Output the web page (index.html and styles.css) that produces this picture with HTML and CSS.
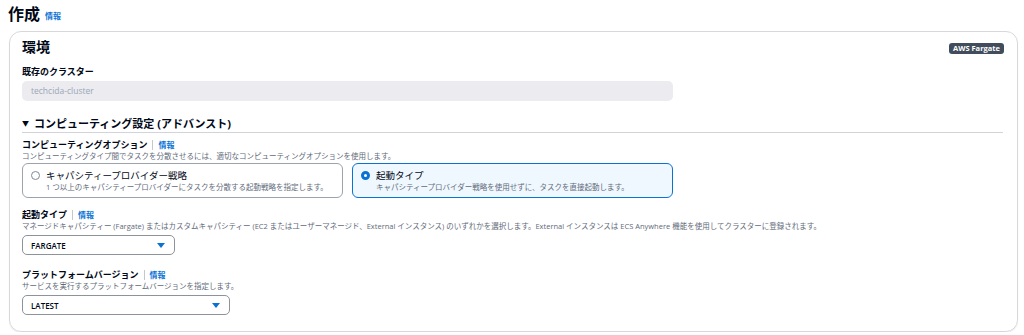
FILE: index.html
```html
<!DOCTYPE html>
<html lang="ja">
<head>
    <meta charset="UTF-8">
    <title>作成</title>
    <link rel="stylesheet" href="styles.css">
</head>
<body>
    <div class="page">
        <div class="page-title">
            <h1>作成</h1>
            <a class="info-link" href="#">情報</a>
        </div>

        <div class="card">
            <div class="card-header">
                <h2>環境</h2>
                <span class="badge">AWS Fargate</span>
            </div>

            <div class="field">
                <div class="label">既存のクラスター</div>
                <div class="input-disabled">techcida-cluster</div>
            </div>

            <div class="expand-header">
                <span class="caret-down">&#9660;</span>
                <span>コンピューティング設定 (アドバンスト)</span>
            </div>

            <div class="field field-first">
                <div class="label">コンピューティングオプション<span class="sep"></span><a class="info-link" href="#">情報</a></div>
                <div class="desc">コンピューティングタイプ間でタスクを分散させるには、適切なコンピューティングオプションを使用します。</div>
                <div class="tiles">
                    <div class="tile">
                        <span class="radio"></span>
                        <div>
                            <div class="tile-title">キャパシティープロバイダー戦略</div>
                            <div class="tile-desc">1 つ以上のキャパシティープロバイダーにタスクを分散する起動戦略を指定します。</div>
                        </div>
                    </div>
                    <div class="tile selected">
                        <span class="radio checked"></span>
                        <div>
                            <div class="tile-title">起動タイプ</div>
                            <div class="tile-desc">キャパシティープロバイダー戦略を使用せずに、タスクを直接起動します。</div>
                        </div>
                    </div>
                </div>
            </div>

            <div class="field">
                <div class="label">起動タイプ<span class="sep"></span><a class="info-link" href="#">情報</a></div>
                <div class="desc">マネージドキャパシティー (Fargate) またはカスタムキャパシティー (EC2 またはユーザーマネージド、External インスタンス) のいずれかを選択します。External インスタンスは ECS Anywhere 機能を使用してクラスターに登録されます。</div>
                <div class="select select-short">
                    <span>FARGATE</span>
                    <svg width="8" height="5" viewBox="0 0 8 5"><path d="M0 0 H8 L4 5 Z" fill="#0972d3"/></svg>
                </div>
            </div>

            <div class="field field-last">
                <div class="label">プラットフォームバージョン<span class="sep"></span><a class="info-link" href="#">情報</a></div>
                <div class="desc">サービスを実行するプラットフォームバージョンを指定します。</div>
                <div class="select select-mid">
                    <span>LATEST</span>
                    <svg width="8" height="5" viewBox="0 0 8 5"><path d="M0 0 H8 L4 5 Z" fill="#0972d3"/></svg>
                </div>
            </div>
        </div>
    </div>
</body>
</html>
```

FILE: styles.css
```css
body {
    margin: 0;
    font-family: "Open Sans", "Noto Sans CJK JP", sans-serif;
    color: #000716;
    background-color: #ffffff;
}
.page {
    padding: 2px 6px 0 9px;
}
.page-title {
    display: flex;
    align-items: center;
    gap: 5px;
    height: 24px;
    margin-left: -1px;
}
.page-title h1 {
    margin: 0;
    font-size: 16px;
    font-weight: 700;
    line-height: 22px;
}
.page-title .info-link {
    margin-top: 3px;
}
.info-link {
    color: #0972d3;
    font-size: 8px;
    font-weight: 700;
    text-decoration: none;
}
.card {
    margin-top: 5px;
    border: 1px solid #d8d8dc;
    border-radius: 12px;
    box-shadow: 0 1px 1px rgba(0,0,0,0.08);
    padding: 5px 12px 16px 12px;
    height: 278px;
}
.card-header {
    display: flex;
    justify-content: space-between;
    align-items: center;
    height: 20px;
}
.card-header h2 {
    margin: 0;
    font-size: 14px;
    font-weight: 700;
    line-height: 20px;
}
.badge {
    background-color: #414d5c;
    color: #ffffff;
    font-size: 7.5px;
    font-weight: 700;
    line-height: 11px;
    padding: 0 4px;
    border-radius: 3px;
    margin-right: 1px;
    margin-top: 3px;
}
.field {
    margin-top: 9px;
    width: 651px;
}
.label {
    display: flex;
    align-items: center;
    font-size: 9px;
    font-weight: 700;
    line-height: 12px;
}
.sep {
    display: inline-block;
    width: 1px;
    height: 10px;
    background-color: #c6c6cd;
    margin: 0 5px 0 5px;
}
.desc {
    font-size: 7.5px;
    line-height: 11px;
    color: #5f6b7a;
    white-space: nowrap;
}
.input-disabled {
    margin-top: 3px;
    height: 20px;
    background-color: #ebebf0;
    border-radius: 5px;
    color: #9ba7b6;
    font-size: 8.5px;
    line-height: 20px;
    padding-left: 9px;
}
.expand-header {
    margin-top: 15px;
    display: flex;
    align-items: center;
    gap: 5px;
    font-size: 11px;
    font-weight: 700;
    line-height: 16px;
    border-bottom: 1px solid #d1d5db;
    margin-right: 2px;
}
.caret-down {
    font-size: 7px;
}
.field-first {
    margin-top: 6px;
}
.tiles {
    display: grid;
    grid-template-columns: 1fr 1fr;
    gap: 9px;
    margin-top: 1px;
}
.tile {
    display: flex;
    align-items: flex-start;
    gap: 6px;
    height: 35px;
    box-sizing: border-box;
    border: 1px solid #9ba3ad;
    border-radius: 6px;
    padding: 5px 8px;
}
.tile.selected {
    border-color: #0972d3;
    background-color: #f0f8ff;
}
.radio {
    flex: none;
    width: 9px;
    height: 9px;
    box-sizing: border-box;
    border: 1px solid #7d8998;
    border-radius: 50%;
    margin-top: 2px;
}
.radio.checked {
    border: 3px solid #0972d3;
    background-color: #ffffff;
}
.tile-title {
    font-size: 9.5px;
    font-weight: 400;
    line-height: 13px;
}
.tile-desc {
    font-size: 7.5px;
    line-height: 11px;
    color: #5f6b7a;
    white-space: nowrap;
}
.field + .field {
    margin-top: 11px;
}
.field + .field-last {
    margin-top: 14px;
}
.select {
    margin-top: 3px;
    height: 20px;
    box-sizing: border-box;
    border: 1px solid #8c939b;
    border-radius: 5px;
    display: flex;
    align-items: center;
    justify-content: space-between;
    padding: 0 9px 0 8px;
    font-size: 8px;
    font-weight: 600;
}
.select-short {
    width: 153px;
}
.select-mid {
    width: 208px;
}
```
